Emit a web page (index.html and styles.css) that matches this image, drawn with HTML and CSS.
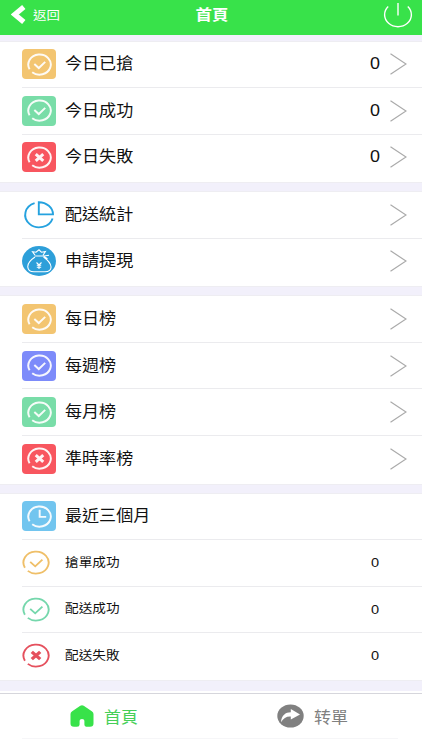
FILE: index.html
```
<!DOCTYPE html>
<html lang="zh-Hant">
<head>
  <meta charset="UTF-8">
  <meta name="viewport" content="width=device-width, initial-scale=1.0">
  <title>首頁</title>
  <link rel="stylesheet" href="styles.css">
</head>
<body>
  <!-- shared icons -->
  <svg class="defs">
    <symbol id="check" viewBox="0 0 28 26" preserveAspectRatio="none">
      <path d="M2.9 18.4A12.6 11.4 0 1 1 5.8 21.7M8.2 12.4L13.2 17L20.4 10" />
    </symbol>
    <symbol id="cross" viewBox="0 0 28 26" preserveAspectRatio="none">
      <path d="M2.9 18.4A12.6 11.4 0 1 1 5.8 21.7" />
      <path class="bold" d="M9.8 9.2L18.2 16.8M18.2 9.2L9.8 16.8" />
    </symbol>
    <symbol id="clock" viewBox="0 0 28 26" preserveAspectRatio="none">
      <path d="M2.9 18.4A12.6 11.4 0 1 1 5.8 21.7M14.2 5.5V13.4H21.5" />
    </symbol>
    <symbol id="arrow" viewBox="0 0 17 22">
      <path d="M.5 .8L16 11L.5 21.2" />
    </symbol>
  </svg>

  <header class="header">
    <a class="back">
      <svg width="15" height="19" viewBox="0 0 15 19"><path d="M12.8 2L3.8 9.5L12.8 17" /></svg>
      <span>返回</span>
    </a>
    <h1>首頁</h1>
    <svg class="power" width="30" height="26" viewBox="0 0 30 26"><path d="M5.2 4.5A13.4 12 0 1 0 24.8 4.5M15 1V13.5" /></svg>
  </header>

  <main>
    <section class="group">
      <div class="row">
        <span class="tile orange"><svg><use href="#check" /></svg></span>
        <span class="label">今日已搶</span><span class="count">0</span>
        <svg class="arrow"><use href="#arrow" /></svg>
      </div>
      <div class="row">
        <span class="tile green"><svg><use href="#check" /></svg></span>
        <span class="label">今日成功</span><span class="count">0</span>
        <svg class="arrow"><use href="#arrow" /></svg>
      </div>
      <div class="row">
        <span class="tile red"><svg><use href="#cross" /></svg></span>
        <span class="label">今日失敗</span><span class="count">0</span>
        <svg class="arrow"><use href="#arrow" /></svg>
      </div>
    </section>

    <section class="group">
      <div class="row">
        <svg class="pie" width="34" height="30" viewBox="0 0 34 30">
          <path d="M12.6 3.2A14 12.4 0 1 0 30.6 18.5" />
          <path d="M16.8 2.2V14.4H31A14.2 12.2 0 0 0 16.8 2.2Z" />
        </svg>
        <span class="label">配送統計</span>
        <svg class="arrow"><use href="#arrow" /></svg>
      </div>
      <div class="row">
        <svg class="bag" width="34" height="30" viewBox="0 0 34 30">
          <ellipse cx="17" cy="15" rx="17" ry="15" />
          <path d="M13 9.2L10.5 5.8L14 6.2L17 3.8L19.4 6.2L23.4 5.6L21 9.2M12.8 10H22M13 11C8.5 14 5.5 17.5 5.8 21C6 24.3 9 25.8 12 25.8H23C27 25.8 29.3 23.8 29 20.8C28.6 17 25.5 13.8 21.5 11M22 10L27 9.2M22 10.5L25.5 12.8" />
          <path d="M14.5 16.5L17 19L19.5 16.5M17 19V23M14.8 19.3H19.2M14.8 21.2H19.2" />
        </svg>
        <span class="label">申請提現</span>
        <svg class="arrow"><use href="#arrow" /></svg>
      </div>
    </section>

    <section class="group">
      <div class="row">
        <span class="tile orange"><svg><use href="#check" /></svg></span>
        <span class="label">每日榜</span>
        <svg class="arrow"><use href="#arrow" /></svg>
      </div>
      <div class="row">
        <span class="tile purple"><svg><use href="#check" /></svg></span>
        <span class="label">每週榜</span>
        <svg class="arrow"><use href="#arrow" /></svg>
      </div>
      <div class="row">
        <span class="tile green"><svg><use href="#check" /></svg></span>
        <span class="label">每月榜</span>
        <svg class="arrow"><use href="#arrow" /></svg>
      </div>
      <div class="row">
        <span class="tile red"><svg><use href="#cross" /></svg></span>
        <span class="label">準時率榜</span>
        <svg class="arrow"><use href="#arrow" /></svg>
      </div>
    </section>

    <section class="group last">
      <div class="row">
        <span class="tile blue"><svg><use href="#clock" /></svg></span>
        <span class="label">最近三個月</span>
      </div>
      <div class="row small">
        <svg class="line-icon orange-line"><use href="#check" /></svg>
        <span class="label">搶單成功</span><span class="count">0</span>
      </div>
      <div class="row small">
        <svg class="line-icon green-line"><use href="#check" /></svg>
        <span class="label">配送成功</span><span class="count">0</span>
      </div>
      <div class="row small">
        <svg class="line-icon red-line"><use href="#cross" /></svg>
        <span class="label">配送失敗</span><span class="count">0</span>
      </div>
    </section>
  </main>

  <nav class="tabs">
    <a class="tab active">
      <svg width="24" height="22" viewBox="0 0 24 22"><path d="M10.3 .7Q12 -.4 13.7 .7L21.8 6.2Q23.5 7.3 23.5 9V18.5Q23.5 21.8 20 21.8H17.5Q14.4 21.8 14.4 19.5V15.8Q14.4 14 12 14Q9.6 14 9.6 15.8V19.5Q9.6 21.8 7 21.8H4Q.5 21.8 .5 18.5V9Q.5 7.3 2.2 6.2Z" /></svg>
      <span>首頁</span>
    </a>
    <a class="tab">
      <svg width="27" height="24" viewBox="0 0 27 24">
        <ellipse cx="13.5" cy="12" rx="13.2" ry="11.6" />
        <path class="share" d="M4 18.3C4.5 11.5 8.5 8.3 13.8 8.3V5L23 10.6L13.8 15.5V12.5C9.5 12.2 6.5 14.2 4 18.3Z" />
      </svg>
      <span>转單</span>
    </a>
  </nav>
</body>
</html>
```
FILE: styles.css
```
* {
  box-sizing: border-box;
}
body {
  margin: 0;
  height: 750px;
  overflow: hidden;
  background: #fff;
  color: #111;
  font-family: "Liberation Sans", "Noto Sans CJK TC", sans-serif;
}
svg {
  display: block;
  flex: none;
  fill: none;
}
.defs {
  position: absolute;
  width: 0;
  height: 0;
}
.header {
  display: grid;
  grid-template-columns: 1fr auto 1fr;
  align-items: center;
  height: 34.5px;
  padding: 0 9px 5px 11px;
  background: #38e24a;
  color: #fff;
}
.back {
  display: flex;
  align-items: center;
  gap: 7px;
  font-size: 12px;
}
.back svg {
  stroke: #fff;
  stroke-width: 5.2;
}
.back span {
  transform: scaleX(1.12);
  transform-origin: left;
}
.header h1 {
  margin: 0;
  font-size: 15px;
  line-height: 20px;
  transform: scaleX(1.1);
}
.power {
  justify-self: end;
  stroke: #fff;
  stroke-width: 1.4;
}
main {
  display: flex;
  flex-direction: column;
  gap: 10px;
  padding: 7px 0 11px;
  background: #f2f0fb;
}
.group {
  padding-bottom: 1.2px;
  background: #fff;
  box-shadow: 0 0 0 1px #eeedf2;
}
.group.last {
  padding-bottom: 0;
}
.row {
  display: flex;
  align-items: center;
  height: 46.5px;
  margin-left: 22px;
  padding-right: 15px;
  border-bottom: 1px solid #ebebee;
}
.row:last-child {
  border-bottom-color: transparent;
}
.tile {
  display: flex;
  align-items: center;
  justify-content: center;
  width: 34px;
  height: 30px;
  border-radius: 4px;
}
.tile svg {
  width: 25px;
  height: 23px;
  stroke: #fff;
  stroke-width: 2.2;
  opacity: 0.93;
}
.bold {
  stroke-width: 3.4;
}
.orange {
  background: #f3c571;
}
.green {
  background: #79dda8;
}
.red {
  background: #f8565f;
}
.purple {
  background: #7d8bfa;
}
.blue {
  background: #72c5ef;
}
.label {
  margin-left: 9px;
  font-size: 15.5px;
  line-height: 24px;
  white-space: nowrap;
  transform: scaleX(1.1);
  transform-origin: left;
}
.count {
  width: 12px;
  margin-left: auto;
  margin-right: 9px;
  font-size: 16px;
  text-align: center;
  transform: scaleX(1.12);
}
.arrow {
  width: 17px;
  height: 22px;
  margin-left: auto;
  stroke: #aaa;
  stroke-width: 1.2;
}
.count + .arrow {
  margin-left: 0;
}
.pie {
  stroke: #25a2df;
  stroke-width: 1.9;
}
.bag {
  stroke: #fff;
  stroke-width: 1.1;
}
.bag ellipse {
  fill: #2d9fd9;
  stroke: none;
}
.line-icon {
  width: 28px;
  height: 25px;
  stroke-width: 1.9;
}
.orange-line {
  stroke: #efbf68;
}
.green-line {
  stroke: #75d7ac;
}
.red-line {
  stroke: #e5505d;
}
.small .label {
  margin-left: 15px;
  font-size: 12.4px;
}
.small .count {
  margin-right: 26px;
  font-size: 13px;
}
.tabs {
  display: flex;
  height: 46.5px;
  margin-top: 2px;
  padding-right: 7px;
  border-top: 1px solid #d6d6dc;
  background: linear-gradient(#f6f6f8, #f6f6f8) 22px 100% / 376px 1px no-repeat;
}
.tab {
  display: flex;
  flex: 1;
  align-items: center;
  justify-content: center;
  gap: 10px;
  color: #808080;
  font-size: 16px;
}
.active {
  padding-right: 3px;
}
.tab svg {
  fill: #808080;
}
.tab .share {
  fill: #fff;
}
.tab span {
  transform: scaleX(1.06);
  transform-origin: left;
}
.active {
  color: #46cf58;
}
.active svg {
  fill: #38e24a;
}
```
